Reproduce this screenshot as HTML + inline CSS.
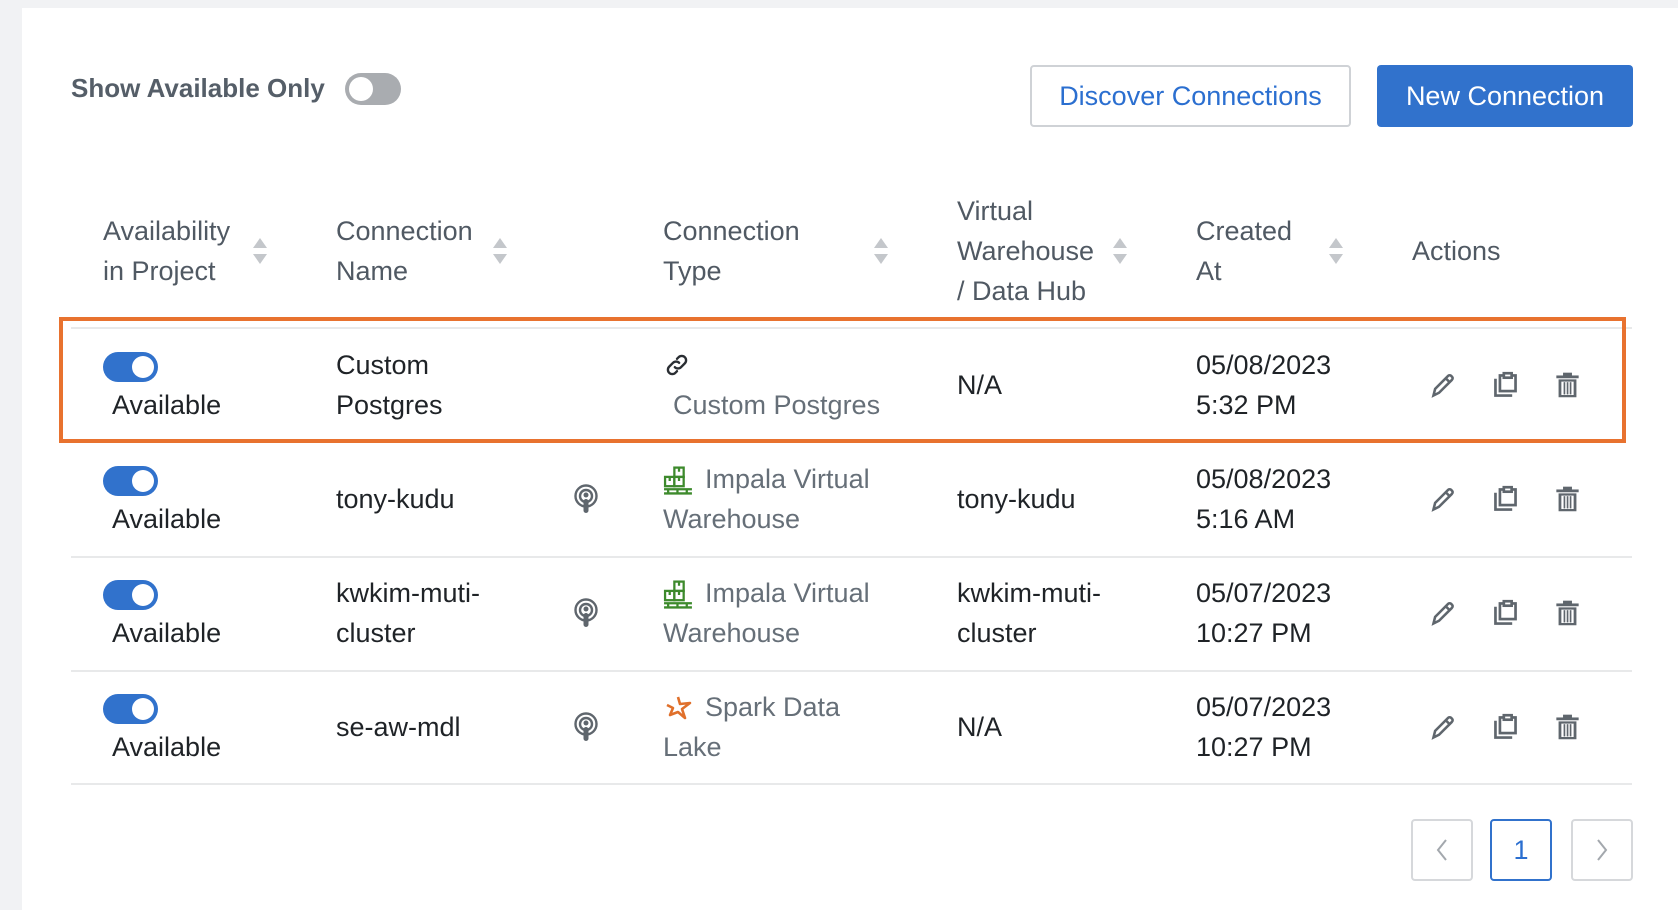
<!DOCTYPE html>
<html><head><meta charset="utf-8">
<style>
*{margin:0;padding:0;box-sizing:border-box}
body{width:1678px;height:910px;background:#f1f2f4;font-family:"Liberation Sans",sans-serif;position:relative;overflow:hidden}
#card{position:absolute;left:22px;top:8px;width:1656px;height:902px;background:#fff}
.a{position:absolute;white-space:nowrap;line-height:40px}
.h{color:#505963;font-size:27px}
.d{color:#1f2327;font-size:27px}
.t{color:#666f78;font-size:27px}
.sep{position:absolute;left:71px;width:1561px;height:2px;background:#e8e9ea}
.tg{position:absolute;width:55px;height:30px;border-radius:15px;background:#3172cc}
.tg::after{content:"";position:absolute;right:4px;top:4px;width:22px;height:22px;border-radius:50%;background:#fff}
.sort{position:absolute;width:14px;height:26px}
.btn{position:absolute;border-radius:4px;font-size:27px;text-align:center;line-height:60px}
.pg{position:absolute;top:819px;width:62px;height:62px;border:2px solid #d6d8db;border-radius:4px;text-align:center;line-height:58px;font-size:27px;color:#9aa0a6}
</style></head><body>
<div id="card"></div>

<div class="a" style="left:71px;top:68px;font-size:26px;font-weight:bold;color:#555e68">Show Available Only</div>
<div style="position:absolute;left:345px;top:73px;width:56px;height:32px;border-radius:16px;background:#a9acb0"><div style="position:absolute;left:4px;top:4px;width:24px;height:24px;border-radius:50%;background:#fff"></div></div>

<div class="btn" style="left:1030px;top:65px;width:321px;height:62px;border:2px solid #cfd2d6;color:#2b6fd0;line-height:58px">Discover Connections</div>
<div class="btn" style="left:1377px;top:65px;width:256px;height:62px;background:#3172cc;color:#fff;line-height:62px">New Connection</div>

<div class="a h" style="left:103px;top:211px">Availability</div>
<div class="a h" style="left:103px;top:251px">in Project</div>
<div class="a h" style="left:336px;top:211px">Connection</div>
<div class="a h" style="left:336px;top:251px">Name</div>
<div class="a h" style="left:663px;top:211px">Connection</div>
<div class="a h" style="left:663px;top:251px">Type</div>
<div class="a h" style="left:957px;top:191px">Virtual</div>
<div class="a h" style="left:957px;top:231px">Warehouse</div>
<div class="a h" style="left:957px;top:271px">/ Data Hub</div>
<div class="a h" style="left:1196px;top:211px">Created</div>
<div class="a h" style="left:1196px;top:251px">At</div>
<div class="a h" style="left:1412px;top:231px">Actions</div>

<svg class="sort" style="left:253px;top:238px" viewBox="0 0 14 26"><path d="M7 0L14 10H0Z M7 26L14 16H0Z" fill="#c4c7cb"/></svg>
<svg class="sort" style="left:493px;top:238px" viewBox="0 0 14 26"><path d="M7 0L14 10H0Z M7 26L14 16H0Z" fill="#c4c7cb"/></svg>
<svg class="sort" style="left:874px;top:238px" viewBox="0 0 14 26"><path d="M7 0L14 10H0Z M7 26L14 16H0Z" fill="#c4c7cb"/></svg>
<svg class="sort" style="left:1113px;top:238px" viewBox="0 0 14 26"><path d="M7 0L14 10H0Z M7 26L14 16H0Z" fill="#c4c7cb"/></svg>
<svg class="sort" style="left:1329px;top:238px" viewBox="0 0 14 26"><path d="M7 0L14 10H0Z M7 26L14 16H0Z" fill="#c4c7cb"/></svg>

<div class="sep" style="top:327px"></div>
<div class="sep" style="top:556px"></div>
<div class="sep" style="top:670px"></div>
<div class="sep" style="top:783px"></div>
<div style="position:absolute;left:59px;top:317px;width:1567px;height:126px;border:4px solid #e8722f"></div>

<div class="tg" style="left:103px;top:352px"></div>
<div class="a d" style="left:112px;top:385px">Available</div>
<div class="a d" style="left:336px;top:345px">Custom</div>
<div class="a d" style="left:336px;top:385px">Postgres</div>
<svg style="position:absolute;left:664px;top:352px" width="26" height="26" viewBox="0 0 24 24" fill="none" stroke="#2a2e33" stroke-width="2.2" stroke-linecap="round"><path d="M10 14a4 4 0 0 0 5.7 0l3.5-3.5a4 4 0 0 0-5.7-5.7L12 6.3"/><path d="M14 10a4 4 0 0 0-5.7 0l-3.5 3.5a4 4 0 0 0 5.7 5.7L12 17.7"/></svg>
<div class="a t" style="left:673px;top:385px">Custom Postgres</div>
<div class="a d" style="left:957px;top:365px">N/A</div>
<div class="a d" style="left:1196px;top:345px">05/08/2023</div>
<div class="a d" style="left:1196px;top:385px">5:32 PM</div>

<div class="tg" style="left:103px;top:466px"></div>
<div class="a d" style="left:112px;top:499px">Available</div>
<div class="a d" style="left:336px;top:479px">tony-kudu</div>
<div class="a t" style="left:705px;top:459px">Impala Virtual</div>
<div class="a t" style="left:663px;top:499px">Warehouse</div>
<div class="a d" style="left:957px;top:479px">tony-kudu</div>
<div class="a d" style="left:1196px;top:459px">05/08/2023</div>
<div class="a d" style="left:1196px;top:499px">5:16 AM</div>

<div class="tg" style="left:103px;top:580px"></div>
<div class="a d" style="left:112px;top:613px">Available</div>
<div class="a d" style="left:336px;top:573px">kwkim-muti-</div>
<div class="a d" style="left:336px;top:613px">cluster</div>
<div class="a t" style="left:705px;top:573px">Impala Virtual</div>
<div class="a t" style="left:663px;top:613px">Warehouse</div>
<div class="a d" style="left:957px;top:573px">kwkim-muti-</div>
<div class="a d" style="left:957px;top:613px">cluster</div>
<div class="a d" style="left:1196px;top:573px">05/07/2023</div>
<div class="a d" style="left:1196px;top:613px">10:27 PM</div>

<div class="tg" style="left:103px;top:694px"></div>
<div class="a d" style="left:112px;top:727px">Available</div>
<div class="a d" style="left:336px;top:707px">se-aw-mdl</div>
<div class="a t" style="left:705px;top:687px">Spark Data</div>
<div class="a t" style="left:663px;top:727px">Lake</div>
<div class="a d" style="left:957px;top:707px">N/A</div>
<div class="a d" style="left:1196px;top:687px">05/07/2023</div>
<div class="a d" style="left:1196px;top:727px">10:27 PM</div>

<svg style="position:absolute;left:573px;top:483px" width="26" height="32" viewBox="0 0 26 30" fill="none" stroke="#5f666d" stroke-width="2.4"><circle cx="13" cy="12" r="10.5"/><circle cx="13" cy="12" r="6"/><circle cx="13" cy="11" r="2.5" fill="#5f666d" stroke="none"/><rect x="10.5" y="15" width="5" height="14" rx="2.5" fill="#5f666d" stroke="none"/></svg>
<svg style="position:absolute;left:573px;top:597px" width="26" height="32" viewBox="0 0 26 30" fill="none" stroke="#5f666d" stroke-width="2.4"><circle cx="13" cy="12" r="10.5"/><circle cx="13" cy="12" r="6"/><circle cx="13" cy="11" r="2.5" fill="#5f666d" stroke="none"/><rect x="10.5" y="15" width="5" height="14" rx="2.5" fill="#5f666d" stroke="none"/></svg>
<svg style="position:absolute;left:573px;top:711px" width="26" height="32" viewBox="0 0 26 30" fill="none" stroke="#5f666d" stroke-width="2.4"><circle cx="13" cy="12" r="10.5"/><circle cx="13" cy="12" r="6"/><circle cx="13" cy="11" r="2.5" fill="#5f666d" stroke="none"/><rect x="10.5" y="15" width="5" height="14" rx="2.5" fill="#5f666d" stroke="none"/></svg>

<svg style="position:absolute;left:663px;top:464px" width="31" height="32" viewBox="0 0 30 30" fill="none" stroke="#3d8a2c" stroke-width="2.2"><rect x="2" y="12" width="9" height="9"/><rect x="11" y="12" width="9" height="9"/><rect x="11" y="3" width="9" height="9"/><path d="M1 24H28M1 28H28M5 24v4M14 24v4M23 24v4M6.5 12v4M15.5 12v4M15.5 3v4"/></svg>
<svg style="position:absolute;left:663px;top:578px" width="31" height="32" viewBox="0 0 30 30" fill="none" stroke="#3d8a2c" stroke-width="2.2"><rect x="2" y="12" width="9" height="9"/><rect x="11" y="12" width="9" height="9"/><rect x="11" y="3" width="9" height="9"/><path d="M1 24H28M1 28H28M5 24v4M14 24v4M23 24v4M6.5 12v4M15.5 12v4M15.5 3v4"/></svg>
<svg style="position:absolute;left:664px;top:694px" width="30" height="28" viewBox="0 0 30 28" fill="none" stroke="#e0702b" stroke-width="2.6" stroke-linejoin="round"><path d="M14 3L16 10L26 9L18 15L21 24L14 18L6 21L9 14L3 11"/></svg>

<svg style="display:none"><defs>
<g id="pen"><path d="M4 22l1.5-6L17 4.5a2 2 0 0 1 3 0l.5.5a2 2 0 0 1 0 3L9 19.5z" fill="none" stroke="#5f666d" stroke-width="2.3"/><path d="M15 6.5l3 3" stroke="#5f666d" stroke-width="2.3"/></g>
<g id="cpy" fill="none" stroke="#5f666d" stroke-width="2.4"><path d="M4 7v15h15"/><rect x="8" y="4" width="14" height="14"/><rect x="11.5" y="2" width="7" height="4" fill="#fff"/></g>
<g id="del" fill="#5f666d"><rect x="3" y="4" width="20" height="2.5"/><rect x="9" y="1.5" width="8" height="3"/><path d="M5 7.5h16v16H5z M7.5 9.5v12h11v-12z" fill-rule="evenodd"/><rect x="9.5" y="10" width="1.5" height="11"/><rect x="12.3" y="10" width="1.5" height="11"/><rect x="15" y="10" width="1.5" height="11"/></g>
</defs></svg>

<svg style="position:absolute;left:1429px;top:371px" width="29" height="29" viewBox="0 0 26 26"><use href="#pen"/></svg>
<svg style="position:absolute;left:1491px;top:371px" width="29" height="29" viewBox="0 0 26 26"><use href="#cpy"/></svg>
<svg style="position:absolute;left:1553px;top:371px" width="29" height="29" viewBox="0 0 26 26"><use href="#del"/></svg>
<svg style="position:absolute;left:1429px;top:485px" width="29" height="29" viewBox="0 0 26 26"><use href="#pen"/></svg>
<svg style="position:absolute;left:1491px;top:485px" width="29" height="29" viewBox="0 0 26 26"><use href="#cpy"/></svg>
<svg style="position:absolute;left:1553px;top:485px" width="29" height="29" viewBox="0 0 26 26"><use href="#del"/></svg>
<svg style="position:absolute;left:1429px;top:599px" width="29" height="29" viewBox="0 0 26 26"><use href="#pen"/></svg>
<svg style="position:absolute;left:1491px;top:599px" width="29" height="29" viewBox="0 0 26 26"><use href="#cpy"/></svg>
<svg style="position:absolute;left:1553px;top:599px" width="29" height="29" viewBox="0 0 26 26"><use href="#del"/></svg>
<svg style="position:absolute;left:1429px;top:713px" width="29" height="29" viewBox="0 0 26 26"><use href="#pen"/></svg>
<svg style="position:absolute;left:1491px;top:713px" width="29" height="29" viewBox="0 0 26 26"><use href="#cpy"/></svg>
<svg style="position:absolute;left:1553px;top:713px" width="29" height="29" viewBox="0 0 26 26"><use href="#del"/></svg>

<div class="pg" style="left:1411px"><svg width="18" height="26" viewBox="0 0 18 26" style="margin-top:16px"><path d="M13 3L5 13L13 23" fill="none" stroke="#a3a8ad" stroke-width="2"/></svg></div>
<div class="pg" style="left:1490px;border-color:#3172cc;color:#2b6fd0">1</div>
<div class="pg" style="left:1571px"><svg width="18" height="26" viewBox="0 0 18 26" style="margin-top:16px"><path d="M5 3L13 13L5 23" fill="none" stroke="#a3a8ad" stroke-width="2"/></svg></div>
</body></html>
